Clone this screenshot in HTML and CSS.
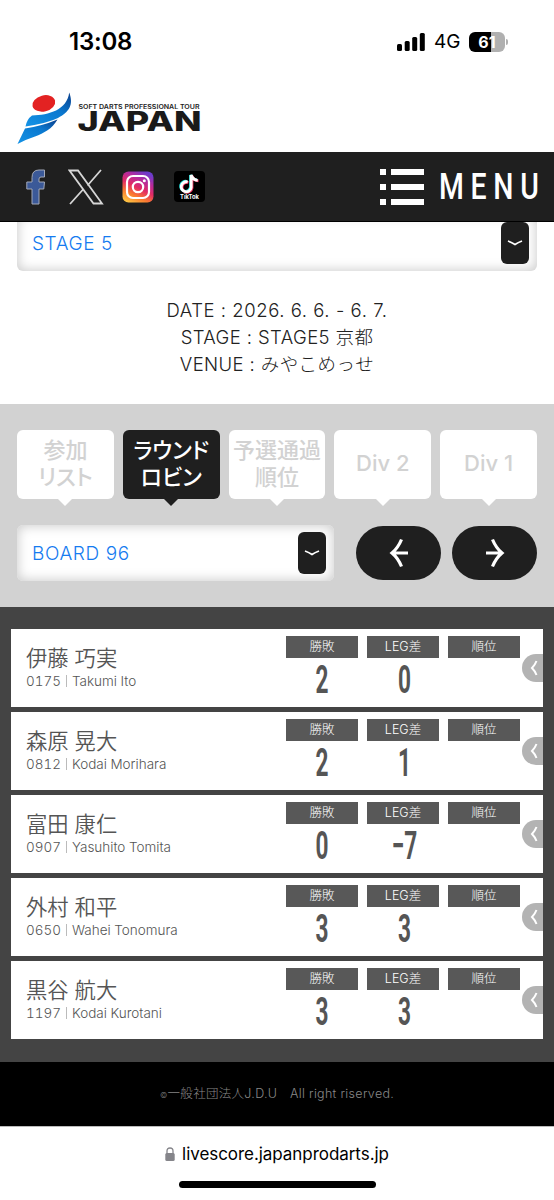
FILE: index.html
```html
<!DOCTYPE html>
<html lang="ja">
<head>
    <meta charset="UTF-8">
    <title>JAPAN Live Score</title>
    <meta name="viewport" content="width=device-width, initial-scale=1">
    <link rel="stylesheet" href="styles.css">
</head>
<body>
    <div class="status-bar">
        <span class="time">13:08</span>
        <div class="status-right">
            <svg class="signal" viewBox="0 0 28 18">
                <rect x="0" y="11" width="5" height="7" rx="1.5"/>
                <rect x="7.7" y="8" width="5" height="10" rx="1.5"/>
                <rect x="15.2" y="4" width="5" height="14" rx="1.5"/>
                <rect x="22.8" y="0" width="5" height="18" rx="1.5"/>
            </svg>
            <span class="network">4G</span>
            <div class="battery">61</div>
            <span class="battery-cap"></span>
        </div>
    </div>

    <header>
        <svg class="logo" viewBox="0 0 186 54">
            <defs>
                <linearGradient id="blue" x1="0" y1="1" x2="1" y2="0">
                    <stop offset="0" stop-color="#1593e6"/>
                    <stop offset="0.6" stop-color="#0a78cf"/>
                    <stop offset="1" stop-color="#0a3f8c"/>
                </linearGradient>
            </defs>
            <ellipse cx="26.8" cy="11.4" rx="11.6" ry="8" transform="rotate(-14 26.8 11.4)" fill="#e32222"/>
            <path d="M52.2 0.5C57 13 52 20 41 26Q31 31 8.500 34.500Q10 27 15 23.500C32 23 50 18 52.200 0.500Z" fill="url(#blue)"/>
            <path d="M8 36.500Q25 34 40.500 27.500C35 37 27 41 18 44.500Q10 47 .5 52Z" fill="url(#blue)"/>
            <text class="logo-small" x="61.500" y="16.500" textLength="121" lengthAdjust="spacingAndGlyphs">SOFT DARTS PROFESSIONAL TOUR</text>
            <text class="logo-big" x="60.500" y="39" textLength="124" lengthAdjust="spacingAndGlyphs">JAPAN</text>
        </svg>
    </header>

    <nav>
        <div class="social">
            <svg width="20" height="36" viewBox="0 0 20 36">
                <path d="M6 35V20H.8V13H6V8.500Q6 1 13 1H18.500V8H15Q13 8 13 10V13H18.500L17.800 20H13V35Z" fill="#3b5998" stroke="#a3a9b8" stroke-width="1"/>
            </svg>
            <svg width="36" height="36" viewBox="0 0 36 36" fill="none" stroke="#d6d6d6" stroke-width="1.800">
                <path d="M1.500 1.500H10L34 34.500H25.500ZM33 1L19.500 16.500M15.500 20L2 35"/>
            </svg>
            <svg width="32" height="32" viewBox="0 0 32 32">
                <defs>
                    <linearGradient id="insta" x1="0.200" y1="1" x2="0.700" y2="0">
                        <stop offset="0" stop-color="#ffc443"/>
                        <stop offset="0.250" stop-color="#fb7d30"/>
                        <stop offset="0.500" stop-color="#e22b64"/>
                        <stop offset="0.750" stop-color="#b62a9c"/>
                        <stop offset="1" stop-color="#6b3ccc"/>
                    </linearGradient>
                </defs>
                <rect x="0.500" y="0.500" width="31" height="31" rx="6" fill="url(#insta)"/>
                <g fill="none" stroke="#fff" stroke-width="2.200">
                    <rect x="5" y="5" width="22" height="22" rx="6"/>
                    <circle cx="16" cy="16" r="5.200"/>
                </g>
                <circle cx="22.300" cy="9.700" r="1.500" fill="#fff"/>
            </svg>
            <svg width="31" height="31" viewBox="0 0 31 31">
                <rect width="31" height="31" rx="4" fill="#000"/>
                <g fill="none" stroke-width="2.800">
                    <path d="M13 10.500A5 5 0 1 0 16.500 16V4Q18 8.500 23 8.800" stroke="#25e5e0"/>
                    <path d="M14.500 11.500A5 5 0 1 0 18 17V5Q19.500 9.500 24.500 9.800" stroke="#f5305c"/>
                    <path d="M13.700 11A5 5 0 1 0 17.200 16.500V4Q18.700 9 23.700 9.300" stroke="#fff"/>
                </g>
                <text class="tiktok" x="6" y="28" textLength="19" lengthAdjust="spacingAndGlyphs">TikTok</text>
            </svg>
        </div>
        <div class="menu">
            <svg width="44" height="36" viewBox="0 0 44 36" fill="#fff">
                <path d="M0 0H6V6H0ZM11 0H44V6H11ZM0 15H6V21H0ZM11 15H44V21H11ZM0 30H6V36H0ZM11 30H44V36H11Z"/>
            </svg>
            <span class="menu-text">MENU</span>
        </div>
    </nav>

    <section class="stage">
        <div class="select">
            <span>STAGE 5</span>
            <span class="select-btn"><svg width="16" height="8" viewBox="0 0 16 8"><path d="M1 2Q5 3.500 8 5.500Q11 3.500 15 2"/></svg></span>
        </div>
        <div class="info">
            <p class="date">DATE : 2026. 6. 6. - 6. 7.</p>
            <p>STAGE : STAGE5 京都</p>
            <p>VENUE : みやこめっせ</p>
        </div>
    </section>

    <section class="controls">
        <div class="tabs">
            <a class="tab">参加<br>リスト</a>
            <a class="tab active">ラウンド<br>ロビン</a>
            <a class="tab">予選通過<br>順位</a>
            <a class="tab">Div 2</a>
            <a class="tab">Div 1</a>
        </div>
        <div class="board-row">
            <div class="select">
                <span>BOARD 96</span>
                <span class="select-btn"><svg width="16" height="8" viewBox="0 0 16 8"><path d="M1 2Q5 3.500 8 5.500Q11 3.500 15 2"/></svg></span>
            </div>
            <a class="arrow"><svg width="20" height="30" viewBox="0 0 20 30"><path d="M12.500 1.500Q9 10 3 15Q9 20 12.500 28.500M3 15H19"/></svg></a>
            <a class="arrow"><svg width="20" height="30" viewBox="0 0 20 30"><path d="M7.500 1.500Q11 10 17 15Q11 20 7.500 28.500M17 15H1"/></svg></a>
        </div>
    </section>

    <section class="players">
        <div class="player">
            <div class="name">
                <h2>伊藤 巧実</h2>
                <p>0175<i></i>Takumi Ito</p>
            </div>
            <div class="score"><h3>勝敗</h3><b>2</b></div>
            <div class="score"><h3>LEG差</h3><b>0</b></div>
            <div class="score"><h3>順位</h3></div>
            <span class="open"><svg width="8" height="16" viewBox="0 0 8 16"><path d="M6.500 1Q5 5 2 8Q5 11 6.500 15"/></svg></span>
        </div>
        <div class="player">
            <div class="name">
                <h2>森原 晃大</h2>
                <p>0812<i></i>Kodai Morihara</p>
            </div>
            <div class="score"><h3>勝敗</h3><b>2</b></div>
            <div class="score"><h3>LEG差</h3><b>1</b></div>
            <div class="score"><h3>順位</h3></div>
            <span class="open"><svg width="8" height="16" viewBox="0 0 8 16"><path d="M6.500 1Q5 5 2 8Q5 11 6.500 15"/></svg></span>
        </div>
        <div class="player">
            <div class="name">
                <h2>富田 康仁</h2>
                <p>0907<i></i>Yasuhito Tomita</p>
            </div>
            <div class="score"><h3>勝敗</h3><b>0</b></div>
            <div class="score"><h3>LEG差</h3><b>−7</b></div>
            <div class="score"><h3>順位</h3></div>
            <span class="open"><svg width="8" height="16" viewBox="0 0 8 16"><path d="M6.500 1Q5 5 2 8Q5 11 6.500 15"/></svg></span>
        </div>
        <div class="player">
            <div class="name">
                <h2>外村 和平</h2>
                <p>0650<i></i>Wahei Tonomura</p>
            </div>
            <div class="score"><h3>勝敗</h3><b>3</b></div>
            <div class="score"><h3>LEG差</h3><b>3</b></div>
            <div class="score"><h3>順位</h3></div>
            <span class="open"><svg width="8" height="16" viewBox="0 0 8 16"><path d="M6.500 1Q5 5 2 8Q5 11 6.500 15"/></svg></span>
        </div>
        <div class="player">
            <div class="name">
                <h2>黒谷 航大</h2>
                <p>1197<i></i>Kodai Kurotani</p>
            </div>
            <div class="score"><h3>勝敗</h3><b>3</b></div>
            <div class="score"><h3>LEG差</h3><b>3</b></div>
            <div class="score"><h3>順位</h3></div>
            <span class="open"><svg width="8" height="16" viewBox="0 0 8 16"><path d="M6.500 1Q5 5 2 8Q5 11 6.500 15"/></svg></span>
        </div>
    </section>

    <footer>
        <p><small>©</small>一般社団法人J.D.U　All right riserved.</p>
    </footer>

    <div class="browser-bar">
        <div class="address">
            <svg width="10" height="14" viewBox="0 0 10 14">
                <rect x="0.300" y="6" width="9.400" height="8" rx="1.500" fill="#85858a"/>
                <path d="M2 7V4Q2 1 5 1Q8 1 8 4V7" fill="none" stroke="#85858a" stroke-width="1.300"/>
            </svg>
            <span>livescore.japanprodarts.jp</span>
        </div>
        <div class="home-bar"></div>
    </div>
</body>
</html>
```
FILE: styles.css
```css
* {
    box-sizing: border-box;
}

body {
    margin: 0;
    background: #fff;
    color: #222;
    font-family: Inter, "Noto Sans CJK JP", sans-serif;
    font-weight: 300;
}

h2, h3, p {
    margin: 0;
    font-weight: 300;
}

svg {
    display: block;
    flex: none;
}

.status-bar {
    height: 83px;
    padding: 0 46px 0 69px;
    display: flex;
    justify-content: space-between;
    align-items: center;
    color: #000;
}

.time {
    font-size: 24px;
    font-weight: 600;
    letter-spacing: -0.2px;
}

.status-right {
    display: flex;
    align-items: center;
}

.signal {
    width: 28px;
    height: 18px;
}

.network {
    font-size: 19px;
    font-weight: 400;
    margin: 0 9px 0 9px;
    width: 26px;
}

.battery {
    width: 36px;
    height: 20px;
    border-radius: 6px;
    background: linear-gradient(90deg, #000 61%, #b0b0b0 61%);
    color: #fff;
    font-size: 16px;
    font-weight: 700;
    line-height: 20px;
    text-align: center;
}

.battery-cap {
    width: 2px;
    height: 6px;
    margin-left: 1px;
    border-radius: 0 2px 2px 0;
    background: #b0b0b0;
}

header {
    height: 69px;
    padding: 9px 17px;
}

.logo {
    width: 186px;
    height: 54px;
}

.logo-small {
    font: 600 5.8px Inter, sans-serif;
    fill: #222;
}

.logo-big {
    font: 800 27px Inter, sans-serif;
    fill: #1a1a1a;
}

nav {
    position: relative;
    z-index: 1;
    height: 70px;
    padding: 0 14px 0 26px;
    display: flex;
    justify-content: space-between;
    align-items: center;
    background: #1f1f1f;
    border-bottom: 1px solid #000;
}

.social {
    display: flex;
    align-items: center;
    gap: 20px;
}

.social svg:nth-child(1) {
    margin-right: 2px;
}

.social svg:nth-child(2) {
    margin-right: -2px;
}

.tiktok {
    font: 700 5.5px Inter, sans-serif;
    fill: #fff;
}

.menu {
    display: flex;
    align-items: center;
    gap: 15px;
}

.menu-text {
    width: 101px;
    color: #fff;
    font: 500 36px/36px Roboto, sans-serif;
    letter-spacing: 8.5px;
    transform: scaleX(0.79);
    transform-origin: 0 50%;
}

.stage {
    height: 189px;
    margin-top: -7px;
    padding: 0 17px;
}

.select {
    height: 56px;
    padding: 0 8px 0 15px;
    display: flex;
    flex: 1;
    justify-content: space-between;
    align-items: center;
    border-radius: 6px;
    background: #fff;
    box-shadow: inset 0 0 12px 1px #ccc;
    color: #157bf0;
    font-size: 19px;
    letter-spacing: 0.6px;
}

.select-btn {
    width: 28px;
    height: 42px;
    display: flex;
    justify-content: center;
    align-items: center;
    border-radius: 6px;
    background: #1f1f1f;
}

.select-btn path,
.arrow path,
.open path {
    fill: none;
    stroke: #fff;
    stroke-width: 1.8;
}

.info {
    padding-top: 26px;
    text-align: center;
    font-size: 18.5px;
    line-height: 26.9px;
    letter-spacing: 0.4px;
}

.date {
    letter-spacing: 0.55px;
}

.controls {
    height: 203px;
    padding: 26px 17px 0;
    background: #d2d2d2;
}

.tabs {
    display: flex;
    gap: 9px;
}

.tab {
    position: relative;
    width: 97px;
    height: 69px;
    padding-bottom: 2px;
    display: flex;
    justify-content: center;
    align-items: center;
    border-radius: 6px;
    background: #fff;
    color: #d2d2d2;
    font-size: 22px;
    font-weight: 500;
    font-feature-settings: "palt";
    line-height: 27px;
    text-align: center;
    white-space: nowrap;
}

.tab::after {
    content: "";
    position: absolute;
    top: 100%;
    left: 50%;
    margin-left: -7px;
    border: 7px solid transparent;
    border-top-color: #fff;
    border-bottom: 0;
}

.tab.active {
    background: #1f1f1f;
    color: #fff;
}

.tab.active::after {
    border-top-color: #1f1f1f;
}

.board-row {
    margin-top: 26px;
    display: flex;
    align-items: center;
}

.arrow {
    width: 85px;
    height: 54px;
    margin-left: 11px;
    display: flex;
    justify-content: center;
    align-items: center;
    border-radius: 27px;
    background: #1f1f1f;
}

.select + .arrow {
    margin-left: 22px;
}

.arrow path {
    stroke-width: 3.2;
}

.players {
    height: 455px;
    padding: 22px 11px 0;
    display: flex;
    flex-direction: column;
    gap: 5px;
    background: #444;
}

.player {
    position: relative;
    height: 78px;
    padding: 7px 23px 0 15px;
    display: flex;
    gap: 9px;
    background: #fff;
    color: #555;
}

.name {
    flex: 1;
    padding-top: 7px;
}

.name h2 {
    font-size: 21.3px;
    font-weight: 350;
    line-height: 31px;
}

.name p {
    font-size: 13.5px;
    font-feature-settings: "tnum";
    line-height: 15px;
}

.name i {
    display: inline-block;
    width: 1px;
    height: 12px;
    margin: 0 5px;
    vertical-align: -1px;
    background: #bbb;
}

.score {
    width: 72px;
    text-align: center;
}

.score h3 {
    height: 22px;
    background: #585858;
    color: #fff;
    font-size: 12.5px;
    line-height: 21px;
}

.score b {
    display: block;
    font: 700 39px/44px Roboto, sans-serif;
    transform: scaleX(0.58);
}

.score + .score b {
    padding-left: 5px;
}

.open {
    position: absolute;
    top: 25px;
    right: 0;
    width: 21px;
    height: 28px;
    padding: 6px 0 0 8px;
    border-radius: 14px 0 0 14px;
    background: #b3b3b3;
}

.open path {
    stroke-width: 2;
}

footer {
    height: 64px;
    background: #000;
    color: #888;
    font-size: 12.5px;
    line-height: 63px;
    letter-spacing: 0.3px;
    text-align: center;
}

footer small {
    font-size: 8px;
}

.browser-bar {
    height: 74px;
    padding-top: 17px;
    border-top: 1px solid #bbb;
    color: #000;
    font-size: 17px;
    font-weight: 400;
    letter-spacing: -0.05px;
}

.address {
    display: flex;
    justify-content: center;
    align-items: center;
    gap: 7px;
}

.home-bar {
    width: 197px;
    height: 7px;
    margin: 17px auto 0;
    border-radius: 4px;
    background: #000;
}
```
